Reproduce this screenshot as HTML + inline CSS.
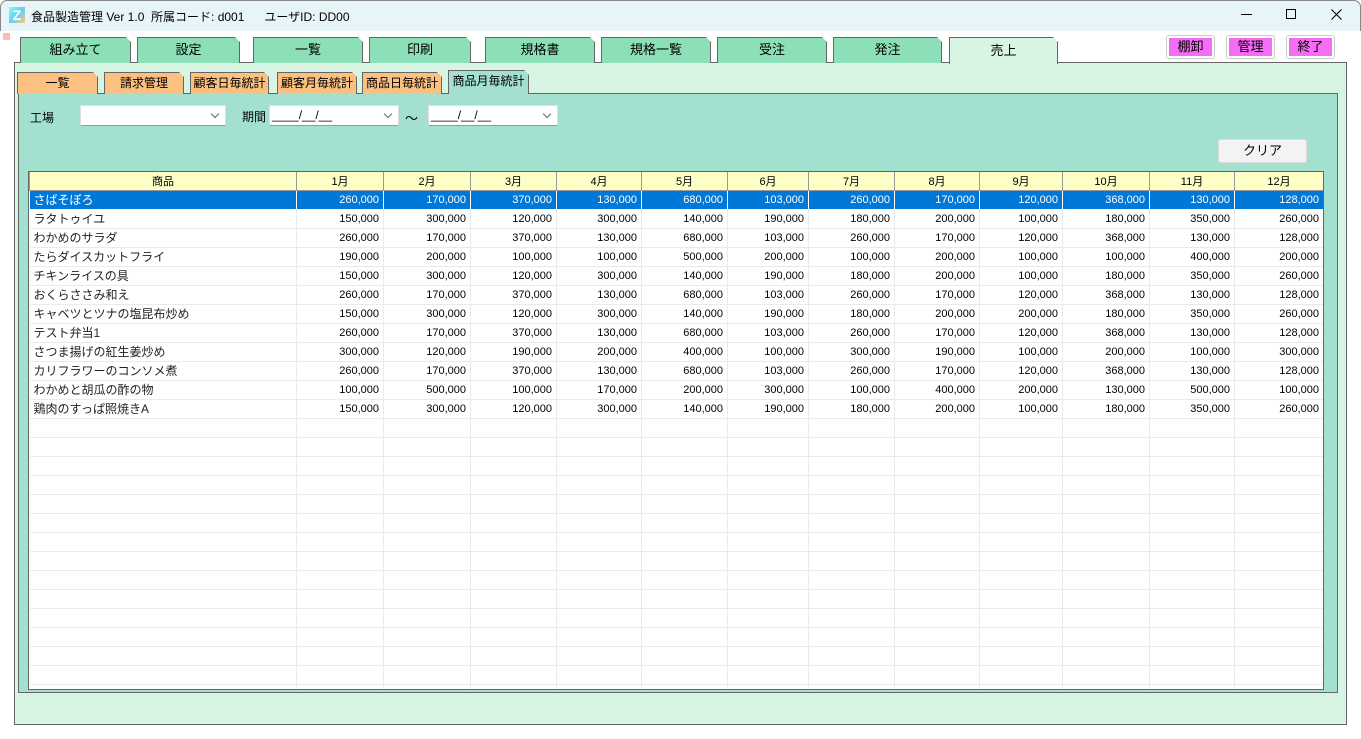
<!DOCTYPE html>
<html><head><meta charset="utf-8"><style>
*{box-sizing:border-box;margin:0;padding:0}
body{width:1361px;height:739px;position:relative;background:#fff;font-family:"Liberation Sans","Noto Sans CJK JP",sans-serif;font-size:12px;color:#000;overflow:hidden}
.abs{position:absolute}
.title{left:0;top:0;width:1361px;height:31px;background:#e8f5f8;border:1px solid #888;border-bottom:none;border-radius:7px 7px 0 0}
.tab{position:absolute;top:37px;height:26px;background:#8cdfb6;border:1px solid #666;border-bottom:none;text-align:center;line-height:24px;font-size:13px;clip-path:polygon(0 0,calc(100% - 5px) 0,100% 5px,100% 100%,0 100%)}
.stab{position:absolute;top:72px;height:22px;background:#fcc080;border:1px solid #666;border-bottom:none;text-align:center;line-height:20px;font-size:12px;clip-path:polygon(0 0,calc(100% - 5px) 0,100% 5px,100% 100%,0 100%)}
.pbtn{position:absolute;top:35px;height:24px;border:1px solid #ccc;border-radius:3px;background:#fff;padding:2px}
.pbtn div{background:#f56cf5;height:18px;text-align:center;line-height:18px;font-size:13px}
.sel{position:absolute;height:21px;background:#fff;border:1px solid #ddd;border-bottom:1px solid #999;font-size:12px;line-height:19px;padding-left:2px}
.sel:after{content:"";position:absolute;right:7px;top:5px;width:5px;height:5px;border-right:1px solid #666;border-bottom:1px solid #666;transform:rotate(45deg)}
.wrap{position:absolute;left:28px;top:171px;width:1296px;height:519px;overflow:hidden;background:#fff;border:1px solid #666}
table{width:1294px;border-collapse:collapse;table-layout:fixed;background:#fff}
td,th{height:19px;border:1px solid #eaeaea;font-size:11px;font-weight:normal;white-space:nowrap;overflow:hidden;padding:0 4px}
th{background:#fdfdc6;border:1px solid #999;border-top:none;height:18px;text-align:center}
td{text-align:right}
td:first-child{text-align:left;font-size:12px;color:#222;border-left:none}
tr.hl td{background:#0078d7;color:#fff;border-color:#fff}
</style></head><body>
<div class="abs title"></div>
<div class="abs" style="left:9px;top:7px;width:16px;height:16px;background:linear-gradient(135deg,#8fd 0%,#6cf 50%,#fc6 100%);color:#fff;font-weight:bold;font-size:14px;line-height:16px;text-align:center">Z</div>
<div class="abs" style="left:31px;top:8px;font-size:12px">食品製造管理 Ver 1.0&nbsp; 所属コード: d001 &nbsp; &nbsp; &nbsp;ユーザID: DD00</div>
<div class="abs" style="left:1241px;top:14px;width:11px;height:1px;background:#000"></div>
<div class="abs" style="left:1286px;top:9px;width:10px;height:10px;border:1px solid #000"></div>
<svg class="abs" style="left:1331px;top:9px" width="11" height="11"><path d="M0.5 0.5L10.5 10.5M10.5 0.5L0.5 10.5" stroke="#000" stroke-width="1.1"/></svg>
<div class="abs" style="left:3px;top:33px;width:7px;height:7px;background:#fbb"></div>

<div class="abs" style="left:14px;top:62px;width:1333px;height:663px;background:#d8f5e4;border:1px solid #666"></div>
<div class="tab" style="left:20px;width:111px">組み立て</div>
<div class="tab" style="left:137px;width:103px">設定</div>
<div class="tab" style="left:253px;width:110px">一覧</div>
<div class="tab" style="left:369px;width:102px">印刷</div>
<div class="tab" style="left:485px;width:110px">規格書</div>
<div class="tab" style="left:601px;width:110px">規格一覧</div>
<div class="tab" style="left:717px;width:110px">受注</div>
<div class="tab" style="left:833px;width:109px">発注</div>
<div class="tab" style="left:949px;width:109px;height:27px;background:#d8f5e4;line-height:26px">売上</div>
<div class="pbtn" style="left:1166px;width:49px"><div>棚卸</div></div>
<div class="pbtn" style="left:1226px;width:49px"><div>管理</div></div>
<div class="pbtn" style="left:1286px;width:49px"><div>終了</div></div>

<div class="abs" style="left:18px;top:93px;width:1320px;height:600px;background:#a3e0d0;border:1px solid #666"></div>
<div class="stab" style="left:17px;width:81px">一覧</div>
<div class="stab" style="left:104px;width:80px">請求管理</div>
<div class="stab" style="left:190px;width:79px">顧客日毎統計</div>
<div class="stab" style="left:277px;width:80px">顧客月毎統計</div>
<div class="stab" style="left:362px;width:80px">商品日毎統計</div>
<div class="stab" style="left:448px;width:81px;top:70px;height:24px;background:#a3e0d0">商品月毎統計</div>

<div class="abs" style="left:30px;top:109px;font-size:12px">工場</div>
<div class="sel" style="left:80px;top:105px;width:146px"></div>
<div class="abs" style="left:242px;top:108px;font-size:12px">期間</div>
<div class="sel" style="left:269px;top:105px;width:130px">____/__/__</div>
<div class="abs" style="left:405px;top:108px;font-size:13px">～</div>
<div class="sel" style="left:428px;top:105px;width:130px">____/__/__</div>
<div class="abs" style="left:1218px;top:139px;width:89px;height:24px;background:#f3f3f3;border:1px solid #ddd;border-radius:3px;text-align:center;line-height:22px;font-size:13px">クリア</div>

<div class="wrap">
<table>
<colgroup><col style="width:267px"><col style="width:87px"><col style="width:87px"><col style="width:86px"><col style="width:85px"><col style="width:86px"><col style="width:81px"><col style="width:86px"><col style="width:85px"><col style="width:83px"><col style="width:87px"><col style="width:85px"><col style="width:89px"></colgroup>
<tr><th>商品</th><th>1月</th><th>2月</th><th>3月</th><th>4月</th><th>5月</th><th>6月</th><th>7月</th><th>8月</th><th>9月</th><th>10月</th><th>11月</th><th>12月</th></tr>
<tr class="hl"><td>さばそぼろ</td><td>260,000</td><td>170,000</td><td>370,000</td><td>130,000</td><td>680,000</td><td>103,000</td><td>260,000</td><td>170,000</td><td>120,000</td><td>368,000</td><td>130,000</td><td>128,000</td></tr>
<tr><td>ラタトゥイユ</td><td>150,000</td><td>300,000</td><td>120,000</td><td>300,000</td><td>140,000</td><td>190,000</td><td>180,000</td><td>200,000</td><td>100,000</td><td>180,000</td><td>350,000</td><td>260,000</td></tr>
<tr><td>わかめのサラダ</td><td>260,000</td><td>170,000</td><td>370,000</td><td>130,000</td><td>680,000</td><td>103,000</td><td>260,000</td><td>170,000</td><td>120,000</td><td>368,000</td><td>130,000</td><td>128,000</td></tr>
<tr><td>たらダイスカットフライ</td><td>190,000</td><td>200,000</td><td>100,000</td><td>100,000</td><td>500,000</td><td>200,000</td><td>100,000</td><td>200,000</td><td>100,000</td><td>100,000</td><td>400,000</td><td>200,000</td></tr>
<tr><td>チキンライスの具</td><td>150,000</td><td>300,000</td><td>120,000</td><td>300,000</td><td>140,000</td><td>190,000</td><td>180,000</td><td>200,000</td><td>100,000</td><td>180,000</td><td>350,000</td><td>260,000</td></tr>
<tr><td>おくらささみ和え</td><td>260,000</td><td>170,000</td><td>370,000</td><td>130,000</td><td>680,000</td><td>103,000</td><td>260,000</td><td>170,000</td><td>120,000</td><td>368,000</td><td>130,000</td><td>128,000</td></tr>
<tr><td>キャベツとツナの塩昆布炒め</td><td>150,000</td><td>300,000</td><td>120,000</td><td>300,000</td><td>140,000</td><td>190,000</td><td>180,000</td><td>200,000</td><td>200,000</td><td>180,000</td><td>350,000</td><td>260,000</td></tr>
<tr><td>テスト弁当1</td><td>260,000</td><td>170,000</td><td>370,000</td><td>130,000</td><td>680,000</td><td>103,000</td><td>260,000</td><td>170,000</td><td>120,000</td><td>368,000</td><td>130,000</td><td>128,000</td></tr>
<tr><td>さつま揚げの紅生姜炒め</td><td>300,000</td><td>120,000</td><td>190,000</td><td>200,000</td><td>400,000</td><td>100,000</td><td>300,000</td><td>190,000</td><td>100,000</td><td>200,000</td><td>100,000</td><td>300,000</td></tr>
<tr><td>カリフラワーのコンソメ煮</td><td>260,000</td><td>170,000</td><td>370,000</td><td>130,000</td><td>680,000</td><td>103,000</td><td>260,000</td><td>170,000</td><td>120,000</td><td>368,000</td><td>130,000</td><td>128,000</td></tr>
<tr><td>わかめと胡瓜の酢の物</td><td>100,000</td><td>500,000</td><td>100,000</td><td>170,000</td><td>200,000</td><td>300,000</td><td>100,000</td><td>400,000</td><td>200,000</td><td>130,000</td><td>500,000</td><td>100,000</td></tr>
<tr><td>鶏肉のすっぱ照焼きA</td><td>150,000</td><td>300,000</td><td>120,000</td><td>300,000</td><td>140,000</td><td>190,000</td><td>180,000</td><td>200,000</td><td>100,000</td><td>180,000</td><td>350,000</td><td>260,000</td></tr>
<tr><td></td><td></td><td></td><td></td><td></td><td></td><td></td><td></td><td></td><td></td><td></td><td></td><td></td></tr>
<tr><td></td><td></td><td></td><td></td><td></td><td></td><td></td><td></td><td></td><td></td><td></td><td></td><td></td></tr>
<tr><td></td><td></td><td></td><td></td><td></td><td></td><td></td><td></td><td></td><td></td><td></td><td></td><td></td></tr>
<tr><td></td><td></td><td></td><td></td><td></td><td></td><td></td><td></td><td></td><td></td><td></td><td></td><td></td></tr>
<tr><td></td><td></td><td></td><td></td><td></td><td></td><td></td><td></td><td></td><td></td><td></td><td></td><td></td></tr>
<tr><td></td><td></td><td></td><td></td><td></td><td></td><td></td><td></td><td></td><td></td><td></td><td></td><td></td></tr>
<tr><td></td><td></td><td></td><td></td><td></td><td></td><td></td><td></td><td></td><td></td><td></td><td></td><td></td></tr>
<tr><td></td><td></td><td></td><td></td><td></td><td></td><td></td><td></td><td></td><td></td><td></td><td></td><td></td></tr>
<tr><td></td><td></td><td></td><td></td><td></td><td></td><td></td><td></td><td></td><td></td><td></td><td></td><td></td></tr>
<tr><td></td><td></td><td></td><td></td><td></td><td></td><td></td><td></td><td></td><td></td><td></td><td></td><td></td></tr>
<tr><td></td><td></td><td></td><td></td><td></td><td></td><td></td><td></td><td></td><td></td><td></td><td></td><td></td></tr>
<tr><td></td><td></td><td></td><td></td><td></td><td></td><td></td><td></td><td></td><td></td><td></td><td></td><td></td></tr>
<tr><td></td><td></td><td></td><td></td><td></td><td></td><td></td><td></td><td></td><td></td><td></td><td></td><td></td></tr>
<tr><td></td><td></td><td></td><td></td><td></td><td></td><td></td><td></td><td></td><td></td><td></td><td></td><td></td></tr>
<tr><td></td><td></td><td></td><td></td><td></td><td></td><td></td><td></td><td></td><td></td><td></td><td></td><td></td></tr>
<tr><td></td><td></td><td></td><td></td><td></td><td></td><td></td><td></td><td></td><td></td><td></td><td></td><td></td></tr>
</table>
</div>
</body></html>
